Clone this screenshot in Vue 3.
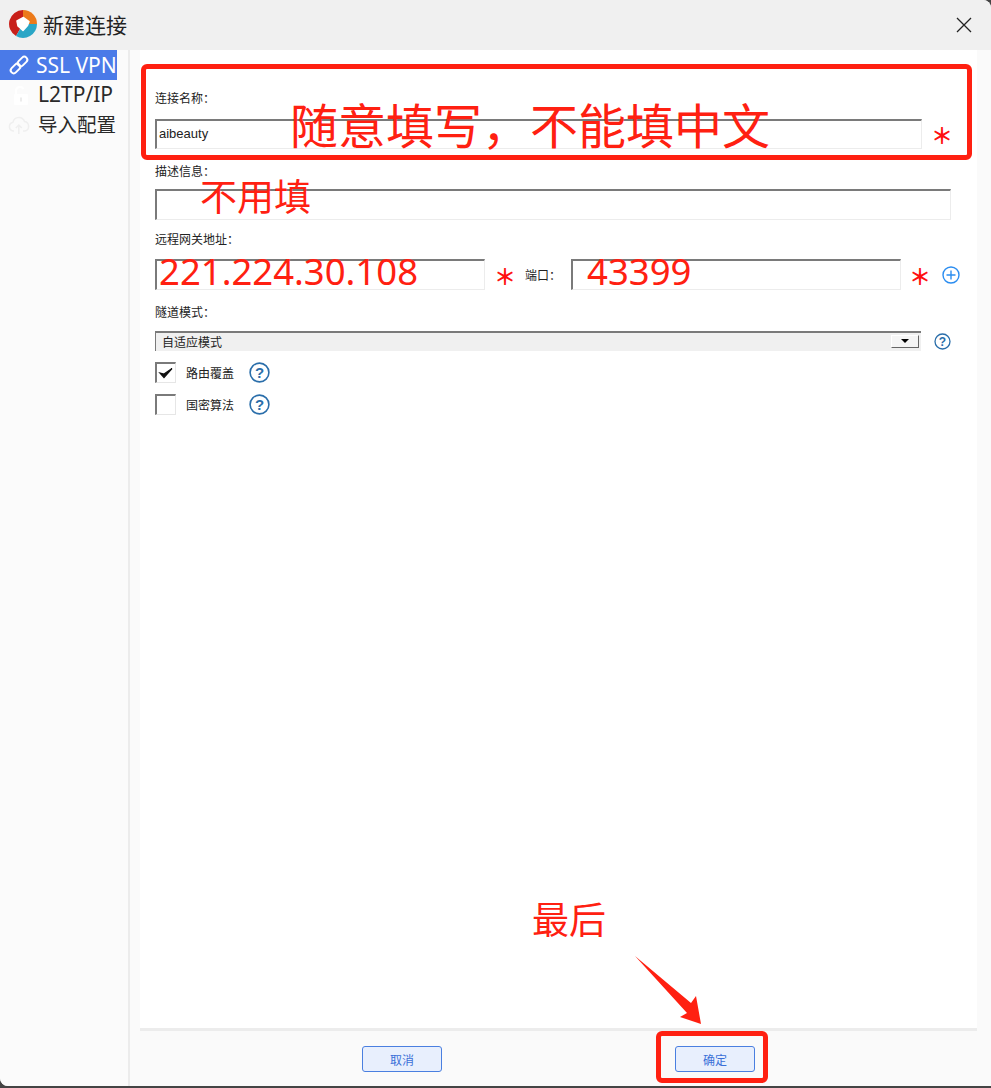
<script setup>
const sideItems = [
  { label: 'SSL VPN', active: true, icon: 'link' },
  { label: 'L2TP/IP', active: false, icon: 'lock' },
  { label: '导入配置', active: false, icon: 'cloud' }
]
</script>

<template>
  <div class="win">
    <header class="title">
      <svg class="logo" width="28" height="28" viewBox="0 0 28 28">
        <path d="M14 14L14 0A14 14 0 0 0 7 26.1Z" fill="#c8201a" />
        <path d="M14 14L14 0A14 14 0 0 1 28 14Z" fill="#ec7a1a" />
        <path d="M14 14L28 14A14 14 0 0 1 7 26.1Z" fill="#2aa6c6" />
        <path d="M14.5 7.5L20 11.5 18.5 15.5 14 20.5 9 16 8 11Z" fill="#fff" stroke="#fff" stroke-width="1.5" stroke-linejoin="round" />
      </svg>
      <span class="title-text">新建连接</span>
      <svg class="close" width="16" height="16" viewBox="0 0 16 16">
        <path d="M1 1L15 15M15 1L1 15" stroke="#222" stroke-width="1.3" fill="none" />
      </svg>
    </header>

    <div class="body">
      <aside class="side">
        <div v-for="it in sideItems" :key="it.label" class="side-item" :class="[it.icon, { active: it.active }]">
          <svg v-if="it.icon === 'link'" class="side-ico" width="22" height="22" viewBox="0 0 22 22" fill="none" stroke="#fff" stroke-width="2">
            <rect x="11.5" y="2" width="6" height="11" rx="3" transform="rotate(45 14.5 7.5)" />
            <rect x="4.5" y="9" width="6" height="11" rx="3" transform="rotate(45 7.5 14.5)" />
          </svg>
          <svg v-else-if="it.icon === 'lock'" class="side-ico" width="22" height="22" viewBox="0 0 22 22">
            <path d="M8 10V6.5A4 4 0 0 1 15.5 5" fill="none" stroke="#fff" stroke-width="2.2" />
            <rect x="6" y="10" width="14" height="11" rx="1" fill="#fff" />
            <rect x="12" y="13.5" width="2" height="4" fill="#ececec" />
          </svg>
          <svg v-else class="side-ico" width="22" height="22" viewBox="0 0 22 22" fill="none" stroke="#efefef" stroke-width="1.5">
            <path d="M6 17H5A4.5 4.5 0 0 1 5 8.2 6 6 0 0 1 16.5 7.6 4.8 4.8 0 0 1 17 17H15" />
            <path d="M10.8 20V11M7.8 14L10.8 11 13.8 14" />
          </svg>
          <span class="side-label">{{ it.label }}</span>
        </div>
      </aside>

      <main class="main">
        <section class="form">
          <label class="lbl lbl-name">连接名称：</label>
          <div class="input input-name">aibeauty</div>

          <label class="lbl lbl-desc">描述信息：</label>
          <div class="input input-desc"></div>

          <label class="lbl lbl-gw">远程网关地址：</label>
          <div class="gw-row">
            <div class="input input-half"></div>
            <span class="port-lbl">端口：</span>
            <div class="input input-half"></div>
            <svg class="plus" width="18" height="18" viewBox="0 0 18 18" fill="none" stroke="#2b8df0" stroke-width="1.4">
              <circle cx="9" cy="9" r="8" />
              <path d="M9 4.5V13.5M4.5 9H13.5" />
            </svg>
          </div>

          <label class="lbl lbl-mode">隧道模式：</label>
          <div class="select-row">
            <div class="select">
              <span>自适应模式</span>
              <span class="drop"><i class="tri"></i></span>
            </div>
            <svg class="help help-sm" width="17" height="17" viewBox="0 0 17 17">
              <circle cx="8.5" cy="8.5" r="7.5" fill="none" stroke="#2a6eaa" stroke-width="1.3" />
              <text x="8.5" y="12.6" text-anchor="middle" class="q q-sm">?</text>
            </svg>
          </div>

          <div class="check-row first">
            <span class="check">
              <svg width="16" height="14" viewBox="0 0 16 14"><path d="M2 7L6 11.5 14 2.5 6 8Z" fill="#111" stroke="#111" stroke-width="1.2" /></svg>
            </span>
            <span class="check-lbl">路由覆盖</span>
            <svg class="help" width="21" height="21" viewBox="0 0 21 21">
              <circle cx="10.5" cy="10.5" r="9.4" fill="none" stroke="#2a6eaa" stroke-width="1.6" />
              <text x="10.5" y="15.6" text-anchor="middle" class="q">?</text>
            </svg>
          </div>
          <div class="check-row">
            <span class="check"></span>
            <span class="check-lbl">国密算法</span>
            <svg class="help" width="21" height="21" viewBox="0 0 21 21">
              <circle cx="10.5" cy="10.5" r="9.4" fill="none" stroke="#2a6eaa" stroke-width="1.6" />
              <text x="10.5" y="15.6" text-anchor="middle" class="q">?</text>
            </svg>
          </div>
        </section>

        <footer class="foot">
          <button class="btn">取消</button>
          <button class="btn">确定</button>
        </footer>
      </main>
    </div>

    <!-- red annotations drawn over the screenshot -->
    <div class="box box-top"></div>
    <div class="box box-ok"></div>
    <span class="note n1">随意填写，不能填中文</span>
    <span class="note n2">不用填</span>
    <span class="note n3">221.224.30.108</span>
    <span class="note n4">43399</span>
    <span class="note n5">最后</span>
    <span class="star s1">＊</span>
    <span class="star s2">＊</span>
    <span class="star s3">＊</span>
    <svg class="arrow" width="80" height="76" viewBox="0 0 80 76">
      <path d="M2 2L58 49 63 42 68 70 47 63 54 59Z" fill="#ff2011" />
    </svg>
  </div>
</template>

<style>
html, body { margin: 0; background: #444; }
</style>

<style scoped>
.win {
  position: relative;
  width: 991px;
  height: 1086px;
  overflow: hidden;
  background: #fafafa;
  border-radius: 0 8px 0 8px;
  font-family: "Liberation Sans", "Noto Sans CJK SC", sans-serif;
  display: flex;
  flex-direction: column;
}
.title {
  height: 50px;
  flex: none;
  background: #f0f0f0;
  display: flex;
  align-items: center;
  padding: 0 19px 0 9px;
}
.logo { flex: none; margin-top: -2px; }
.title-text { margin-left: 6px; font-size: 21px; color: #222; margin-top: -2px; }
.close { margin-left: auto; margin-top: -1px; }
.body { flex: 1; display: flex; min-height: 0; }
.side {
  flex: none;
  box-sizing: border-box;
  padding-right: 11px;
  background: #fbfbfb;
  border-right: 2px solid #ececec;
  width: 130px;
}
.side-item {
  height: 30px;
  display: flex;
  align-items: center;
  overflow: hidden;
  white-space: nowrap;
  font-family: "Noto Sans", "Noto Sans CJK SC", sans-serif;
  font-size: 21px;
  color: #2a2a2a;
  position: relative;
}
.side-item.active { background: #4a7ae8; color: #fff; }
.side-item.cloud { font-size: 19.5px; }
.side-ico { flex: none; margin-left: 8px; }
.side-label { margin-left: 8px; margin-top: -2px; }
.side-item.cloud .side-label { margin-top: -4px; }
.side-item.active .side-label { margin-left: 6px; margin-top: -1px; }
.main { flex: 1; display: flex; flex-direction: column; padding: 0 14px 0 10px; background: #fafafa; min-width: 0; }
.form { flex: 1; background: #fff; padding-left: 15px; min-height: 0; }
.lbl { display: block; font-size: 12px; line-height: 14px; color: #222; }
.lbl-name { margin-top: 42px; }
.lbl-desc { margin-top: 16px; }
.lbl-gw { margin-top: 13px; }
.lbl-mode { margin-top: 16px; }
.input {
  box-sizing: border-box;
  height: 31px;
  background: #fff;
  border: 1px solid #ececec;
  border-top: 2px solid #7a7a7a;
  border-left: 2px solid #7a7a7a;
  font-size: 13px;
  line-height: 26px;
  padding-left: 2px;
  color: #222;
}
.input-name { width: 767px; height: 30px; margin-top: 13px; }
.input-desc { width: 796px; margin-top: 10px; }
.gw-row { display: flex; align-items: center; margin-top: 12px; }
.input-half { width: 330px; flex: none; }
.port-lbl { width: 86px; box-sizing: border-box; padding-left: 40px; font-size: 12px; color: #222; }
.plus { margin-left: 41px; flex: none; }
.select-row { display: flex; align-items: center; margin-top: 11px; }
.select {
  box-sizing: border-box;
  width: 766px;
  height: 20px;
  background: #f0f0f0;
  border-top: 2px solid #7a7a7a;
  border-left: 1px solid #7a7a7a;
  display: flex;
  align-items: center;
  justify-content: space-between;
  padding: 0 2px 2px 6px;
  font-size: 12px;
  color: #222;
}
.drop {
  box-sizing: border-box;
  width: 28px;
  height: 13px;
  background: #f5f5f5;
  border-right: 1px solid #666;
  border-bottom: 1px solid #666;
  border-top: 1px solid #fff;
  border-left: 1px solid #fff;
  display: flex;
  align-items: center;
  justify-content: center;
}
.tri { width: 0; height: 0; border-left: 4px solid transparent; border-right: 4px solid transparent; border-top: 4px solid #000; }
.help-sm { margin-left: 13px; flex: none; }
.q { font: bold 15px "Liberation Sans", sans-serif; fill: #2a6eaa; }
.q-sm { font-size: 12px; }
.check-row { display: flex; align-items: center; height: 21px; margin-top: 11px; }
.check {
  box-sizing: border-box;
  width: 21px;
  height: 21px;
  flex: none;
  background: #fff;
  border: 1px solid #e6e6e6;
  border-top: 2px solid #7a7a7a;
  border-left: 2px solid #7a7a7a;
  display: flex;
  align-items: center;
  justify-content: center;
}
.check-lbl { margin-left: 10px; width: 63px; font-size: 12px; color: #222; }
.help { flex: none; }
.foot {
  height: 58px;
  flex: none;
  border-top: 3px solid #ececec;
  background: #fafafa;
  display: flex;
  align-items: center;
  box-sizing: border-box;
  padding: 1px 0 0 222px;
  gap: 233px;
}
.btn {
  box-sizing: border-box;
  width: 80px;
  height: 26px;
  padding: 0;
  background: #e8effd;
  border: 1px solid #4a7fe0;
  border-radius: 3px;
  color: #3a6fd8;
  font: 12px "Liberation Sans", "Noto Sans CJK SC", sans-serif;
}
.box { position: absolute; box-sizing: border-box; border: 5px solid #ff2011; border-radius: 6px; }
.box-top { left: 141px; top: 64px; width: 831px; height: 96px; }
.box-ok { left: 656px; top: 1031px; width: 112px; height: 52px; }
.note { position: absolute; color: #ff2011; white-space: nowrap; line-height: 1; }
.n1 { left: 290px; top: 104px; font-size: 48px; }
.n2 { left: 200px; top: 180px; font-size: 37px; }
.n3 { left: 159px; top: 253px; font-size: 36.5px; font-family: "Noto Sans", sans-serif; }
.n4 { left: 587px; top: 253px; font-size: 36.5px; font-family: "Noto Sans", sans-serif; }
.n5 { left: 532px; top: 903px; font-size: 37px; }
.star { position: absolute; color: #ff1010; font: bold 22px/22px "Noto Sans CJK SC", sans-serif; }
.s1 { left: 931px; top: 123px; }
.s2 { left: 494px; top: 264px; }
.s3 { left: 909px; top: 264px; }
.arrow { position: absolute; left: 633px; top: 954px; }
</style>
